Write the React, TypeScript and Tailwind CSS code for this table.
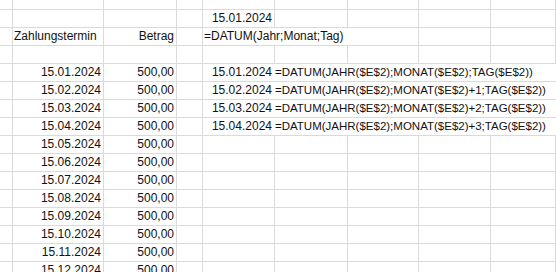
import type { ReactNode } from 'react';

const grid =
  'grid grid-cols-[13px_91px_73px_26px_72px_73px_71px_72px_1fr] border-[#dadada]';

type CellProps = {
  children?: ReactNode;
  className?: string;
};

function Cell({ children, className = '' }: CellProps) {
  return (
    <div
      className={`border-b border-r border-[#dadada] whitespace-nowrap overflow-visible leading-[17px] ${className}`}
    >
      {children}
    </div>
  );
}

const months = ['01', '02', '03', '04', '05', '06', '07', '08', '09', '10', '11', '12'];

export default function App() {
  return (
    <div
      className="w-[556px] h-[272px] overflow-hidden bg-white text-[12px] text-[#111]"
      style={{ fontFamily: '"Liberation Sans", Arial, sans-serif' }}
    >
      {/* row 1 (partial) */}
      <div className={`${grid} h-[10px]`}>
        {Array.from({ length: 9 }).map((_, i) => (
          <Cell key={i} />
        ))}
      </div>

      {/* row 2: reference date */}
      <div className={`${grid} h-[18px]`}>
        <Cell />
        <Cell />
        <Cell />
        <Cell />
        <Cell className="text-right pr-[2px]">15.01.2024</Cell>
        <Cell />
        <Cell />
        <Cell />
        <Cell />
      </div>

      {/* row 3: headers */}
      <div className={`${grid} h-[18px]`}>
        <Cell />
        <Cell className="pl-[1px]">Zahlungstermin</Cell>
        <Cell className="text-right pr-[2px]">Betrag</Cell>
        <Cell />
        <Cell className="col-span-3 pl-[1px]">=DATUM(Jahr;Monat;Tag)</Cell>
        <Cell />
        <Cell />
      </div>

      {/* row 4: empty */}
      <div className={`${grid} h-[18px]`}>
        {Array.from({ length: 9 }).map((_, i) => (
          <Cell key={i} />
        ))}
      </div>

      {months.map((m, i) => {
        const date = `15.${m}.2024`;
        const withFormula = i < 4;
        const plus = i === 0 ? '' : `+${i}`;
        return (
          <div key={m} className={`${grid} h-[18px]`}>
            <Cell />
            <Cell className="text-right pr-[2px]">{date}</Cell>
            <Cell className="text-right pr-[2px]">500,00</Cell>
            <Cell />
            {withFormula ? (
              <>
                <Cell className="text-right pr-[3px] border-r-0">{date}</Cell>
                <Cell className="col-span-4 border-r-0 text-[11.5px]">
                  {`=DATUM(JAHR($E$2);MONAT($E$2)${plus};TAG($E$2))`}
                </Cell>
              </>
            ) : (
              <>
                <Cell />
                <Cell />
                <Cell />
                <Cell />
                <Cell />
              </>
            )}
          </div>
        );
      })}
    </div>
  );
}
